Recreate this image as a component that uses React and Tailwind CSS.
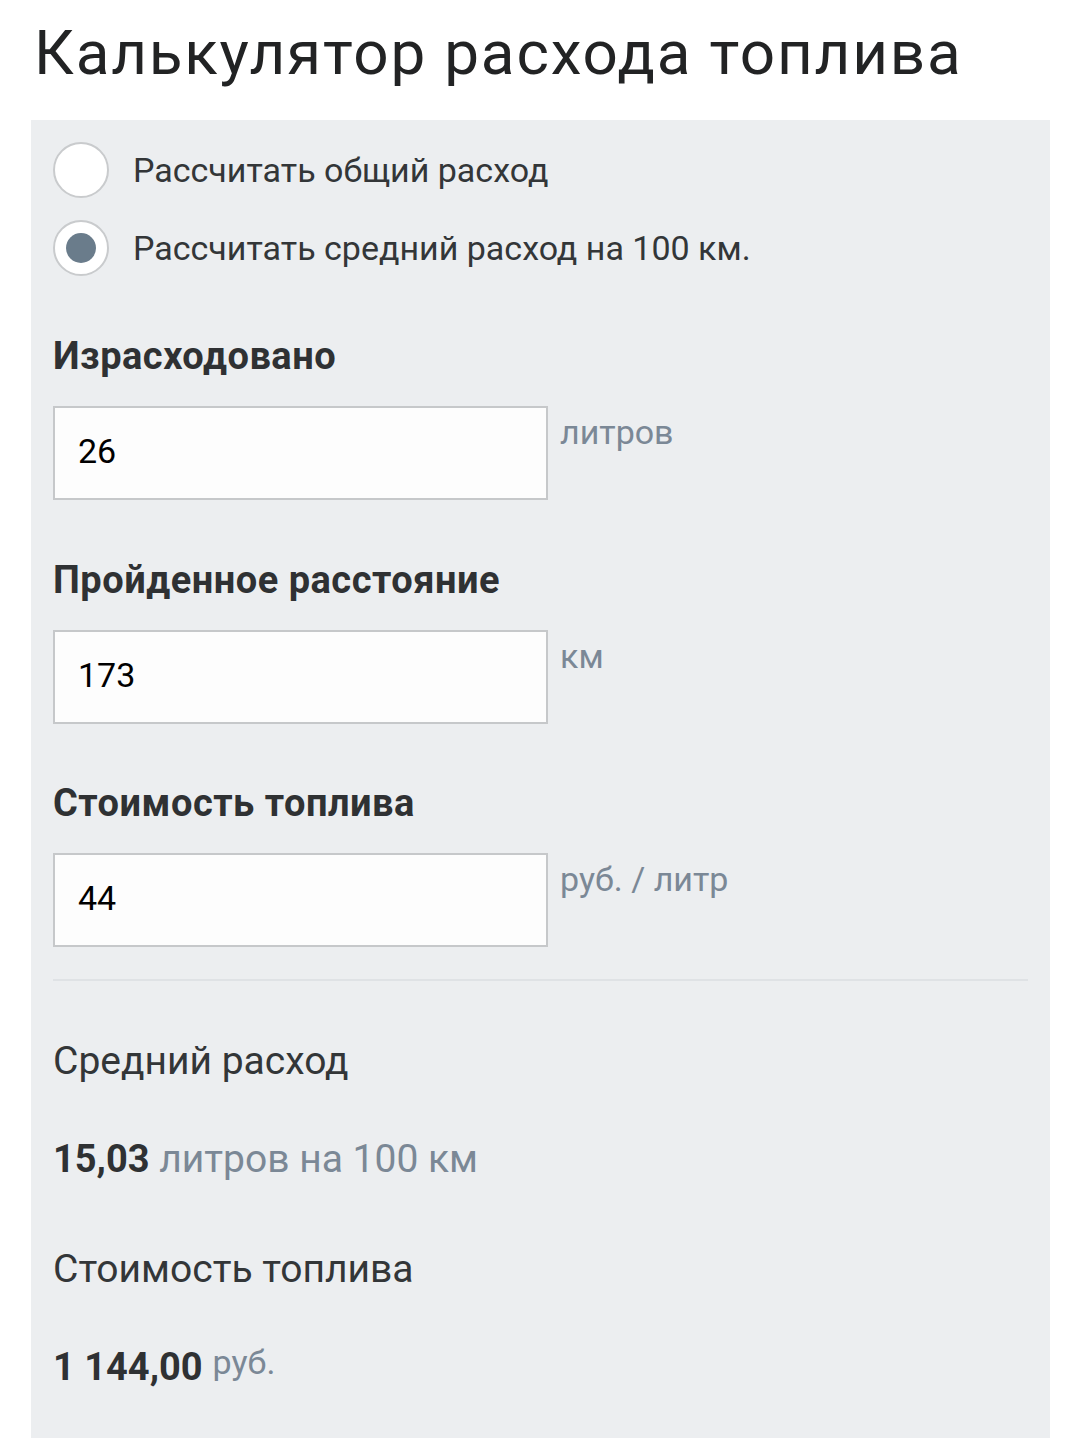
import React from 'react'

const FONT = { fontFamily: 'Roboto, "Noto Sans", sans-serif' }

function Radio({ checked, label }) {
  return (
    <label className="flex items-center h-[56px]">
      <span className="w-[56px] h-[56px] rounded-full bg-white border-2 border-[#c9cbcd] flex items-center justify-center shrink-0">
        {checked && <span className="w-[30px] h-[30px] rounded-full bg-[#6a7c8b]" />}
      </span>
      <span className="ml-[24px] text-[34px] leading-[40px] text-[#333638]">{label}</span>
    </label>
  )
}

function Field({ label, value, unit, className = '' }) {
  return (
    <div className={className}>
      <div className="text-[38px] leading-[40px] font-bold tracking-[0.5px] text-[#2f3133]">{label}</div>
      <div className="flex items-start mt-[30px]">
        <div className="w-[495px] h-[94px] bg-[#fdfdfd] border-2 border-[#c6c8ca] flex items-center pl-[23px] pb-[4px] text-[34px] text-black">
          {value}
        </div>
        <span className="ml-[12px] mt-[6px] text-[34px] leading-[40px] text-[#7b8896]">{unit}</span>
      </div>
    </div>
  )
}

export default function App() {
  return (
    <div className="w-[1080px] h-[1438px] bg-white overflow-hidden" style={FONT}>
      <h1 className="pt-[22px] pl-[34px] text-[62px] leading-[62px] tracking-[1.8px] font-normal text-[#222324]">
        Калькулятор расхода топлива
      </h1>
      <div className="mt-[36px] ml-[31px] w-[1019px] h-[1400px] bg-[#eceef0] pl-[22px] pr-[22px] pt-[22px]">
        <div className="flex flex-col gap-[22px]">
          <Radio label="Рассчитать общий расход" />
          <Radio checked label="Рассчитать средний расход на 100 км." />
        </div>

        <Field className="mt-[60px]" label="Израсходовано" value="26" unit="литров" />
        <Field className="mt-[60px]" label="Пройденное расстояние" value="173" unit="км" />
        <Field className="mt-[59px]" label="Стоимость топлива" value="44" unit="руб. / литр" />

        <div className="mt-[32px] h-[2px] bg-[#dfe2e5]" />

        <div className="mt-[60px] text-[39px] leading-[40px] text-[#333638]">Средний расход</div>
        <div className="mt-[58px] text-[39px] leading-[40px]">
          <span className="font-bold text-[38px] text-[#2f3133]">15,03</span>{' '}
          <span className="text-[#7b8896]">литров на 100 км</span>
        </div>

        <div className="mt-[70px] text-[39px] leading-[40px] text-[#333638]">Стоимость топлива</div>
        <div className="mt-[58px] flex items-start leading-[40px]">
          <span className="text-[38px] font-bold text-[#2f3133]">1 144,00</span>
          <span className="ml-[10px] -mt-[5px] text-[34px] text-[#7b8896]">руб.</span>
        </div>
      </div>
    </div>
  )
}
